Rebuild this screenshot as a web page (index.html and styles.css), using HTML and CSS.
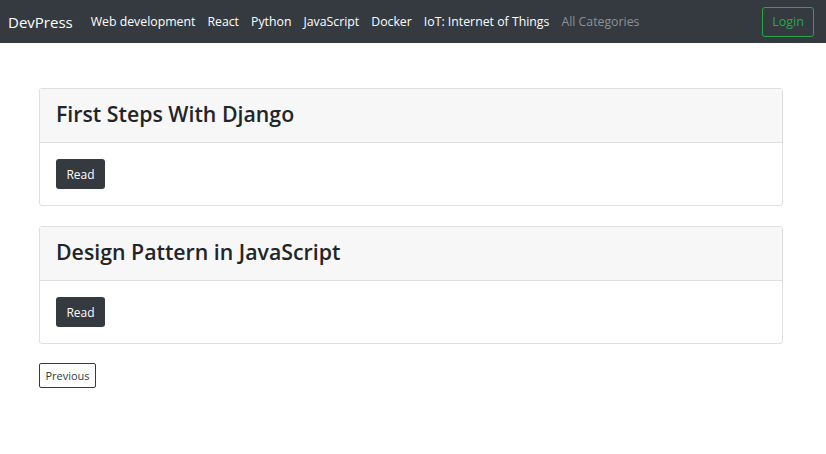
FILE: index.html
```html
<!DOCTYPE html>
<html lang="en">
<head>
<meta charset="utf-8">
<title>DevPress</title>
<link rel="stylesheet" href="styles.css">
</head>
<body>
<nav class="navbar">
  <a class="brand" href="#">DevPress</a>
  <ul class="nav">
    <li><a class="nav-link" href="#">Web development</a></li>
    <li><a class="nav-link" href="#">React</a></li>
    <li><a class="nav-link" href="#">Python</a></li>
    <li><a class="nav-link" href="#">JavaScript</a></li>
    <li><a class="nav-link" href="#">Docker</a></li>
    <li><a class="nav-link" href="#">IoT: Internet of Things</a></li>
    <li><a class="nav-link muted" href="#">All Categories</a></li>
  </ul>
  <button class="btn-login">Login</button>
</nav>
<main class="container">
  <div class="card-list">
    <div class="card">
      <div class="card-header"><h2 class="card-title">First Steps With Django</h2></div>
      <div class="card-body"><button class="btn-read">Read</button></div>
    </div>
    <div class="card">
      <div class="card-header"><h2 class="card-title">Design Pattern in JavaScript</h2></div>
      <div class="card-body"><button class="btn-read">Read</button></div>
    </div>
  </div>
  <div class="pager"><button class="btn-prev">Previous</button></div>
</main>
</body>
</html>
```
FILE: styles.css
```css
* { box-sizing: border-box; }
body {
  margin: 0;
  font-family: "Open Sans", "Noto Sans", sans-serif;
  color: #212529;
  background: #fff;
}
.navbar {
  height: 43px;
  background: #343a40;
  display: flex;
  align-items: center;
  padding: 0 12px 0 8px;
}
.brand {
  color: #fff;
  text-decoration: none;
  font-size: 15px;
  margin-right: 12px;
}
.nav {
  list-style: none;
  margin: 0;
  padding: 0;
  display: flex;
  flex: 1;
}
.nav-link {
  display: block;
  color: #fff;
  text-decoration: none;
  font-size: 12.3px;
  padding: 0 6px;
}
.nav-link.muted { color: #8e9194; }
.btn-login {
  font-family: inherit;
  font-size: 12.5px;
  color: #28a745;
  background: transparent;
  border: 1px solid #28a745;
  border-radius: 3px;
  height: 30px;
  width: 52px;
  padding: 0;
}
.container {
  padding: 45px 43px 0 39px;
}
.card-list {
  display: flex;
  flex-direction: column;
  gap: 20px;
  margin-bottom: 19px;
}
.card {
  border: 1px solid #dfdfdf;
  border-radius: 3px;
}
.card-header {
  background: #f7f7f7;
  border-bottom: 1px solid #dfdfdf;
  height: 54px;
  display: flex;
  align-items: center;
  padding: 0 16px 5px 16px;
}
.card-title {
  margin: 0;
  font-size: 21.3px;
  font-weight: 600;
  color: #212529;
}
.card-body {
  padding: 16px 15px 16px 16px;
}
.btn-read {
  display: block;
  font-family: inherit;
  font-size: 12px;
  color: #fff;
  background: #343a40;
  border: none;
  border-radius: 3px;
  height: 30px;
  width: 49px;
  padding: 0;
}
.btn-prev {
  display: block;
  font-family: inherit;
  font-size: 11px;
  color: #343a40;
  background: #fff;
  border: 1px solid #343a40;
  border-radius: 2px;
  height: 25px;
  width: 57px;
  padding: 0;
}
```
